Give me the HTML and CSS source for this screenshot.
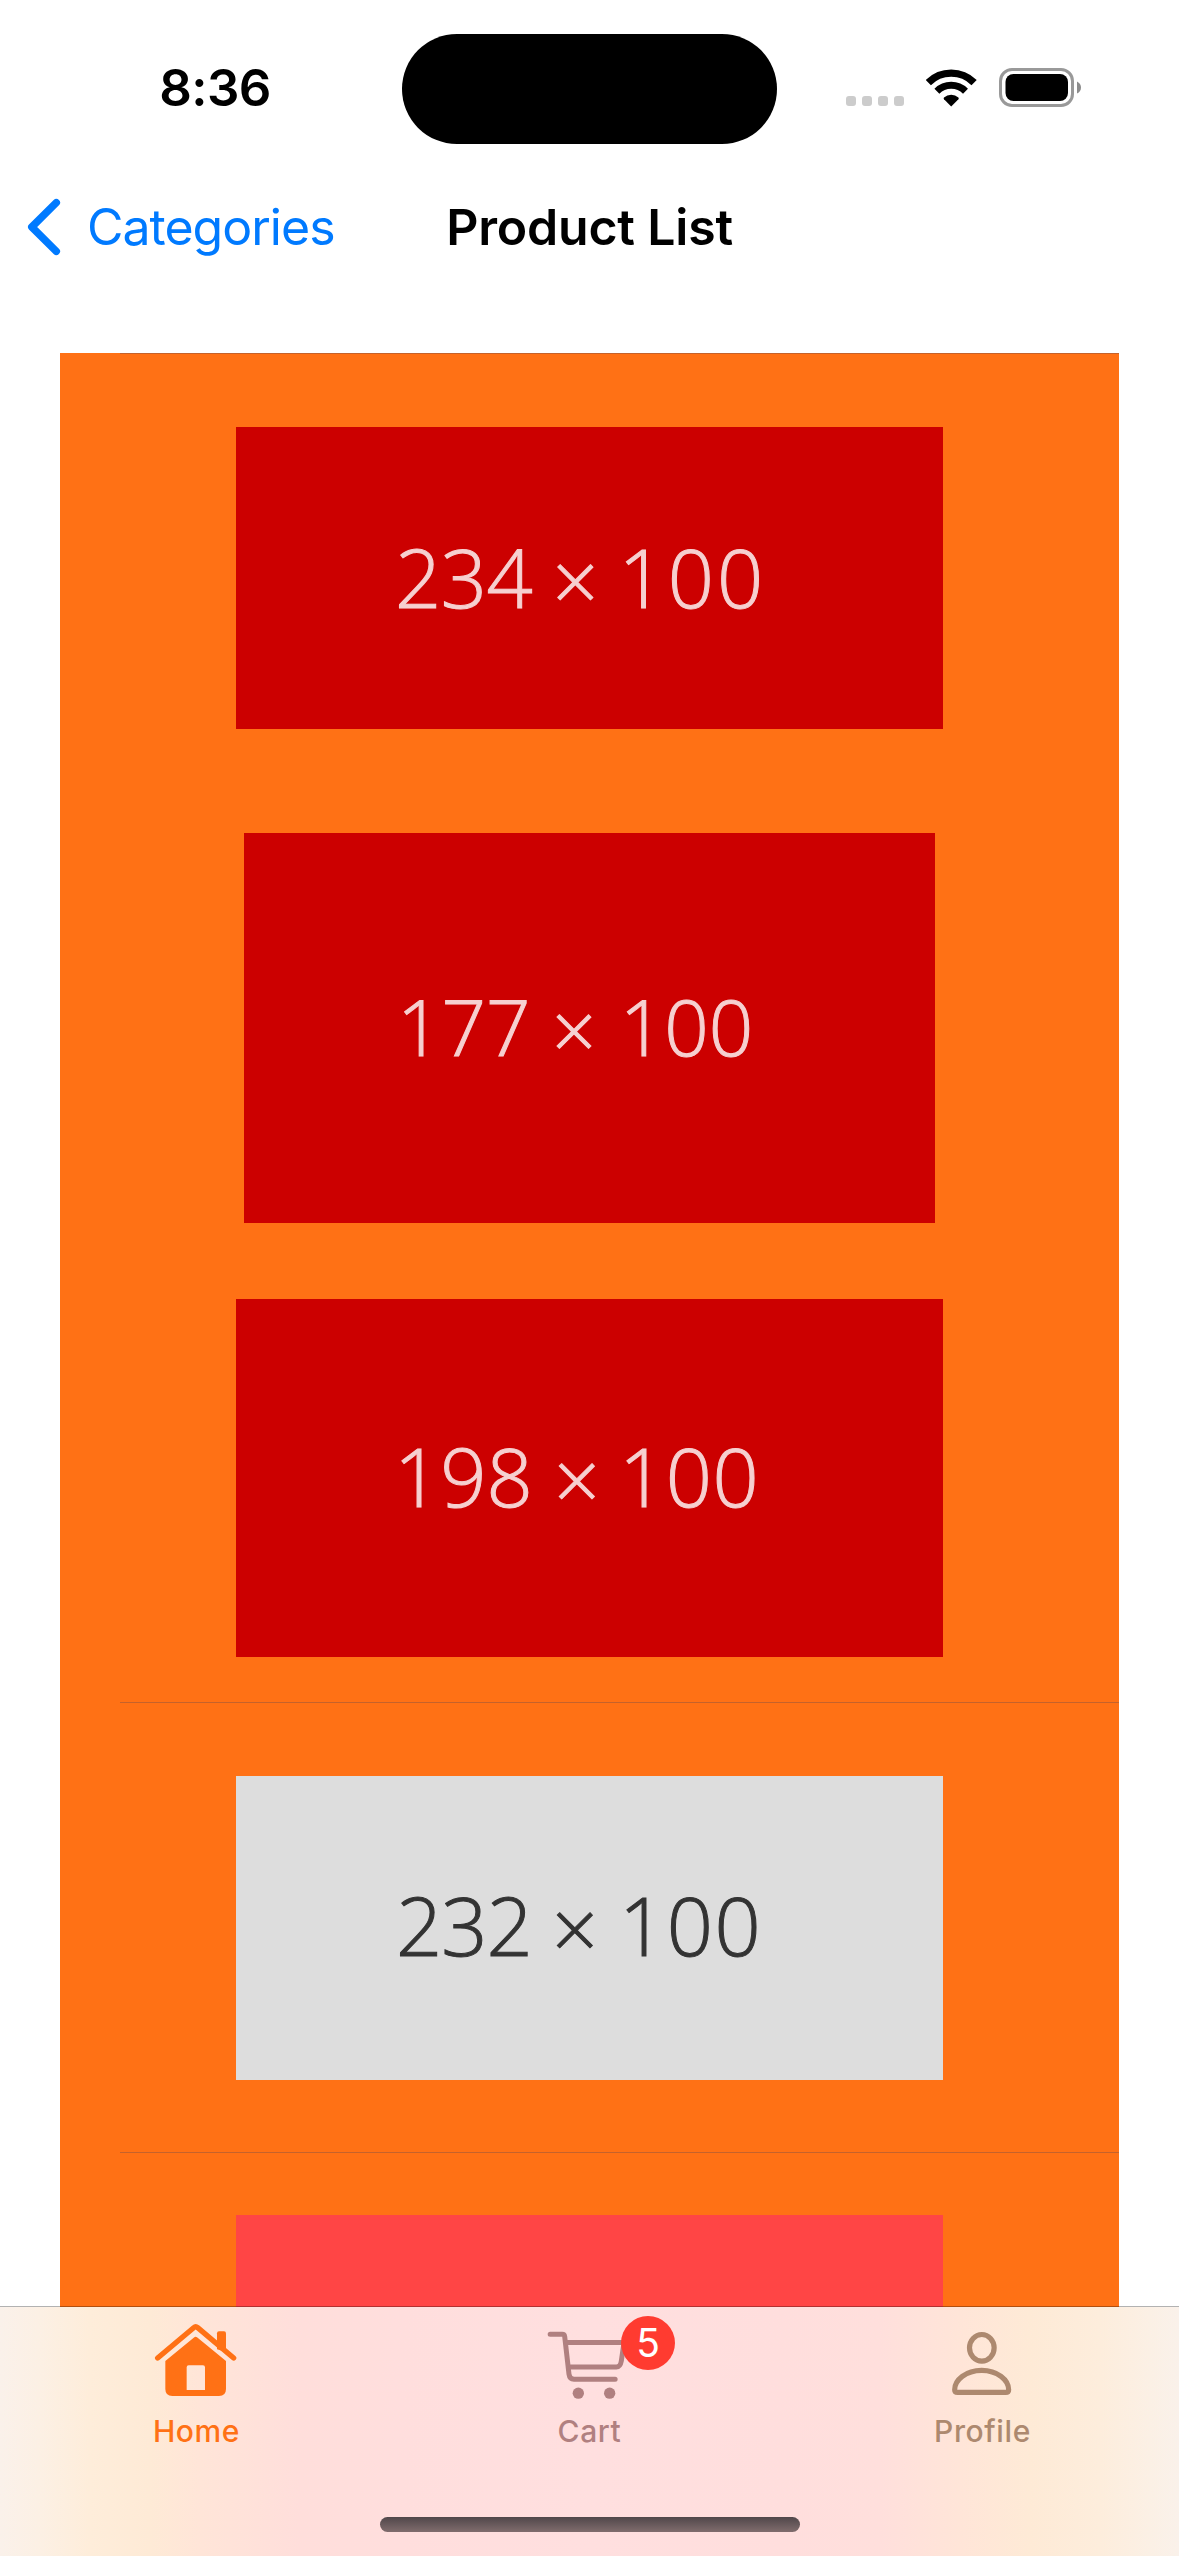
FILE: index.html
```html
<!DOCTYPE html>
<html lang="en">
<head>
<meta charset="utf-8">
<title>Product List</title>
<link rel="stylesheet" href="styles.css">
</head>
<body>
<div class="screen">
  <header class="status">
    <div class="time">8:36</div>
    <div class="island"></div>
    <div class="indicators">
      <div class="signal"><i></i><i></i><i></i><i></i></div>
      <svg class="wifi" viewBox="0 0 50.5 37.5">
        <g fill="none" stroke="#000">
          <path stroke-width="7.4" d="M2.3 13.6A32.4 32.4 0 0 1 48.1 13.6"/>
          <path stroke-width="7" d="M10.9 22.2A20.3 20.3 0 0 1 39.5 22.2"/>
        </g>
        <path d="M25.2 37.5L18 30.2Q17.200 29.300 18 28.500A10.800 10.800 0 0 1 32.400 28.500Q33.200 29.300 32.400 30.200Z"/>
      </svg>
      <svg class="battery" viewBox="0 0 83 39">
        <rect x="1.500" y="1.500" width="72" height="36" rx="11.500" fill="none" stroke="#999" stroke-width="3"/>
        <rect x="6.500" y="6" width="62.500" height="27" rx="8"/>
        <path fill="#8c8c8c" d="M78 13.500Q82 15.500 82 19.500T78 25.500Z"/>
      </svg>
    </div>
  </header>
  <nav class="navbar">
    <a class="back">
      <svg class="chevron" viewBox="0 0 34 58"><path d="M29.300 4.700L4.800 29L29.300 53.300" fill="none" stroke="#007aff" stroke-width="7.500" stroke-linecap="round" stroke-linejoin="round"/></svg>
      <span class="back-label">Categories</span>
    </a>
    <h1 class="title">Product List</h1>
  </nav>
  <main class="list">
    <section class="row row-first"><div class="thumb thumb-a"><span class="w">234</span> <span class="times">×</span> <span class="h">100</span></div></section>
    <section class="row"><div class="thumb thumb-b"><span class="w">177</span> <span class="times">×</span> <span class="h">100</span></div></section>
    <section class="row row-line"><div class="thumb thumb-c"><span class="w">198</span> <span class="times">×</span> <span class="h">100</span></div></section>
    <section class="row row-line"><div class="thumb thumb-d"><span class="w">232</span> <span class="times">×</span> <span class="h">100</span></div></section>
    <section class="row"><div class="thumb thumb-e"></div></section>
  </main>
  <footer class="tabbar">
    <div class="tabs">
      <a class="tab tab-home">
        <svg class="icon" viewBox="153 90 272 240">
          <path fill="currentColor" d="M351 178V130Q351 124 357 124H372Q378 124 378 130V186Z"/>
          <path fill="none" stroke="currentColor" stroke-width="16" stroke-linecap="round" stroke-linejoin="round" d="M173 204L281 113Q287 108 293 113L401 204"/>
          <path fill="currentColor" fill-rule="evenodd" d="M282 142.500Q287 138.500 292 142.500L378 213V297Q378 318 357 318H217Q196 318 196 297V213ZM266 226Q260 226 260 232V300H315V232Q315 226 309 226Z"/>
        </svg>
        <span class="label">Home</span>
      </a>
      <a class="tab tab-cart">
        <svg class="icon" viewBox="133 90 272 240">
          <g fill="none" stroke="currentColor" stroke-width="15" stroke-linecap="round" stroke-linejoin="round">
            <path d="M151.500 133H188Q194 133 195 139L208 253Q210 268 223 268H346.500"/>
            <path d="M200 157.500H373L365 213Q362 231 350 231H213"/>
          </g>
          <circle cx="236" cy="309.500" r="17" fill="currentColor"/>
          <circle cx="330" cy="309.500" r="17" fill="currentColor"/>
        </svg>
        <span class="badge">5</span>
        <span class="label">Cart</span>
      </a>
      <a class="tab tab-profile">
        <svg class="icon" viewBox="111 90 272 240">
          <g fill="none" stroke="currentColor" stroke-width="15.500" stroke-linejoin="round">
            <ellipse cx="245.500" cy="173.500" rx="37" ry="40"/>
            <path d="M164 299C164 270 198 241 245 241S326 270 326 299Q326 307 317 307H173Q164 307 164 299Z"/>
          </g>
        </svg>
        <span class="label">Profile</span>
      </a>
    </div>
    <div class="home-indicator"></div>
  </footer>
</div>
</body>
</html>
```

FILE: styles.css
```css
* { box-sizing: border-box; }
body { margin: 0; background: #fff; }
.screen {
  display: flex;
  flex-direction: column;
  width: 1179px;
  height: 2556px;
  overflow: hidden;
  font-family: Inter, "Liberation Sans", sans-serif;
}

/* Status bar */
.status {
  display: grid;
  grid-template-columns: 402px 375px 402px;
  height: 177px;
  flex: none;
  padding-top: 33px;
}
.time {
  padding: 24px 0 0 28px;
  height: 111px;
  line-height: 62px;
  font-size: 51px;
  font-weight: 600;
  letter-spacing: -.6px;
  text-align: center;
}
.island { height: 110px; margin-top: 1px; border-radius: 55px; background: #000; }
.indicators { display: flex; align-items: flex-start; padding: 35px 0 0 68.500px; }
.signal { display: flex; gap: 6px; padding-top: 28px; }
.signal i { width: 10px; height: 10px; border-radius: 3px; background: #ccc; }
.wifi { width: 50.500px; height: 37.500px; margin: 1px 0 0 22.500px; }
.battery { width: 83px; height: 39px; margin-left: 22px; }

/* Navigation bar */
.navbar {
  display: grid;
  grid-template-columns: 400px 379px 400px;
  height: 176px;
  flex: none;
  padding-top: 19px;
}
.back { display: flex; align-items: flex-start; padding-left: 27px; color: #007aff; }
.chevron { width: 34px; height: 58px; margin-top: 2px; }
.back-label { margin-left: 26px; font-size: 50px; line-height: 62px; letter-spacing: -1px; }
.title {
  margin: 0;
  font-size: 50px;
  font-weight: 600;
  line-height: 62px;
  letter-spacing: -.2px;
  text-align: center;
}

/* Product rows */
.list {
  flex: 1;
  min-height: 0;
  margin: 0 60px;
  overflow: hidden;
  background: #ff7115;
}
.row {
  display: flex;
  align-items: center;
  justify-content: center;
  height: 450px;
  position: relative;
}
.row-first::before, .row-line::after {
  content: "";
  position: absolute;
  left: 60px;
  right: 0;
  height: 1px;
  background: #c5622b;
}
.row-first::before { top: 0; }
.row-line::after { bottom: 0; }
.thumb {
  width: 707px;
  background: #c00;
  color: #f6d0d0;
  font-family: "Open Sans", "Noto Sans", sans-serif;
  font-weight: 300;
  font-size: 81px;
  line-height: 110px;
  white-space: nowrap;
  -webkit-text-stroke: 1px currentColor;
}
.times { position: relative; top: 3px; }
.thumb-a { height: 302px; padding: 95px 0 0 159px; }
.thumb-a .w { letter-spacing: -.5px; }
.thumb-a .times { left: -1px; }
.thumb-a .h { margin-left: -2px; letter-spacing: 3px; }
.thumb-b { width: 691px; height: 390px; padding: 138px 0 0 153px; font-size: 78px; }
.thumb-b .times { left: 1px; }
.thumb-b .h { margin-left: 4px; }
.thumb-c { height: 358px; padding: 122px 0 0 158px; }
.thumb-c .h { margin-left: -2px; letter-spacing: .5px; }
.thumb-d { height: 304px; padding: 94px 0 0 160px; background: #ddd; color: #333; }
.thumb-d .w { letter-spacing: -1px; }
.thumb-d .times { left: -1px; }
.thumb-d .h { margin-left: -1px; letter-spacing: 1.500px; }
.thumb-e { height: 326px; background: #ff4545; }

/* Tab bar */
.tabbar {
  position: relative;
  flex: none;
  height: 249px;
  background: linear-gradient(90deg, #faf1ea 0, #fcf0e4 40px, #feedda 90px, #feead6 150px, #ffe5d8 200px, #ffdedb 300px, #ffdedd 400px, #ffdfdf 590px, #ffdedd 780px, #ffdfdc 880px, #ffe5d8 960px, #feead6 1030px, #fdeddc 1100px, #fbf0e5 1150px, #faf1ea 1179px);
}
.tabbar::before {
  content: "";
  position: absolute;
  top: -1px;
  left: 0;
  right: 0;
  height: 1px;
  background: rgba(0, 0, 0, .3);
}
.tabs { display: grid; grid-template-columns: repeat(3, 393px); height: 210px; }
.tab {
  position: relative;
  display: flex;
  flex-direction: column;
  align-items: center;
  padding-top: 13px;
}
.icon { width: 90.670px; height: 80px; }
.label { margin-top: 12px; font-size: 30px; font-weight: 500; line-height: 38px; letter-spacing: .6px; }
.tab-home { color: #ff7115; }
.tab-cart { color: #b08080; }
.tab-profile { color: #ad896f; }
.badge {
  position: absolute;
  left: 228px;
  top: 9px;
  width: 54px;
  height: 54px;
  border-radius: 50%;
  background: #ff3b30;
  color: #fff;
  font-size: 39px;
  line-height: 54px;
  text-align: center;
}
.home-indicator {
  width: 420px;
  height: 15px;
  margin: 0 auto;
  border-radius: 8px;
  background: linear-gradient(#50474a, #806c6d);
}
```
